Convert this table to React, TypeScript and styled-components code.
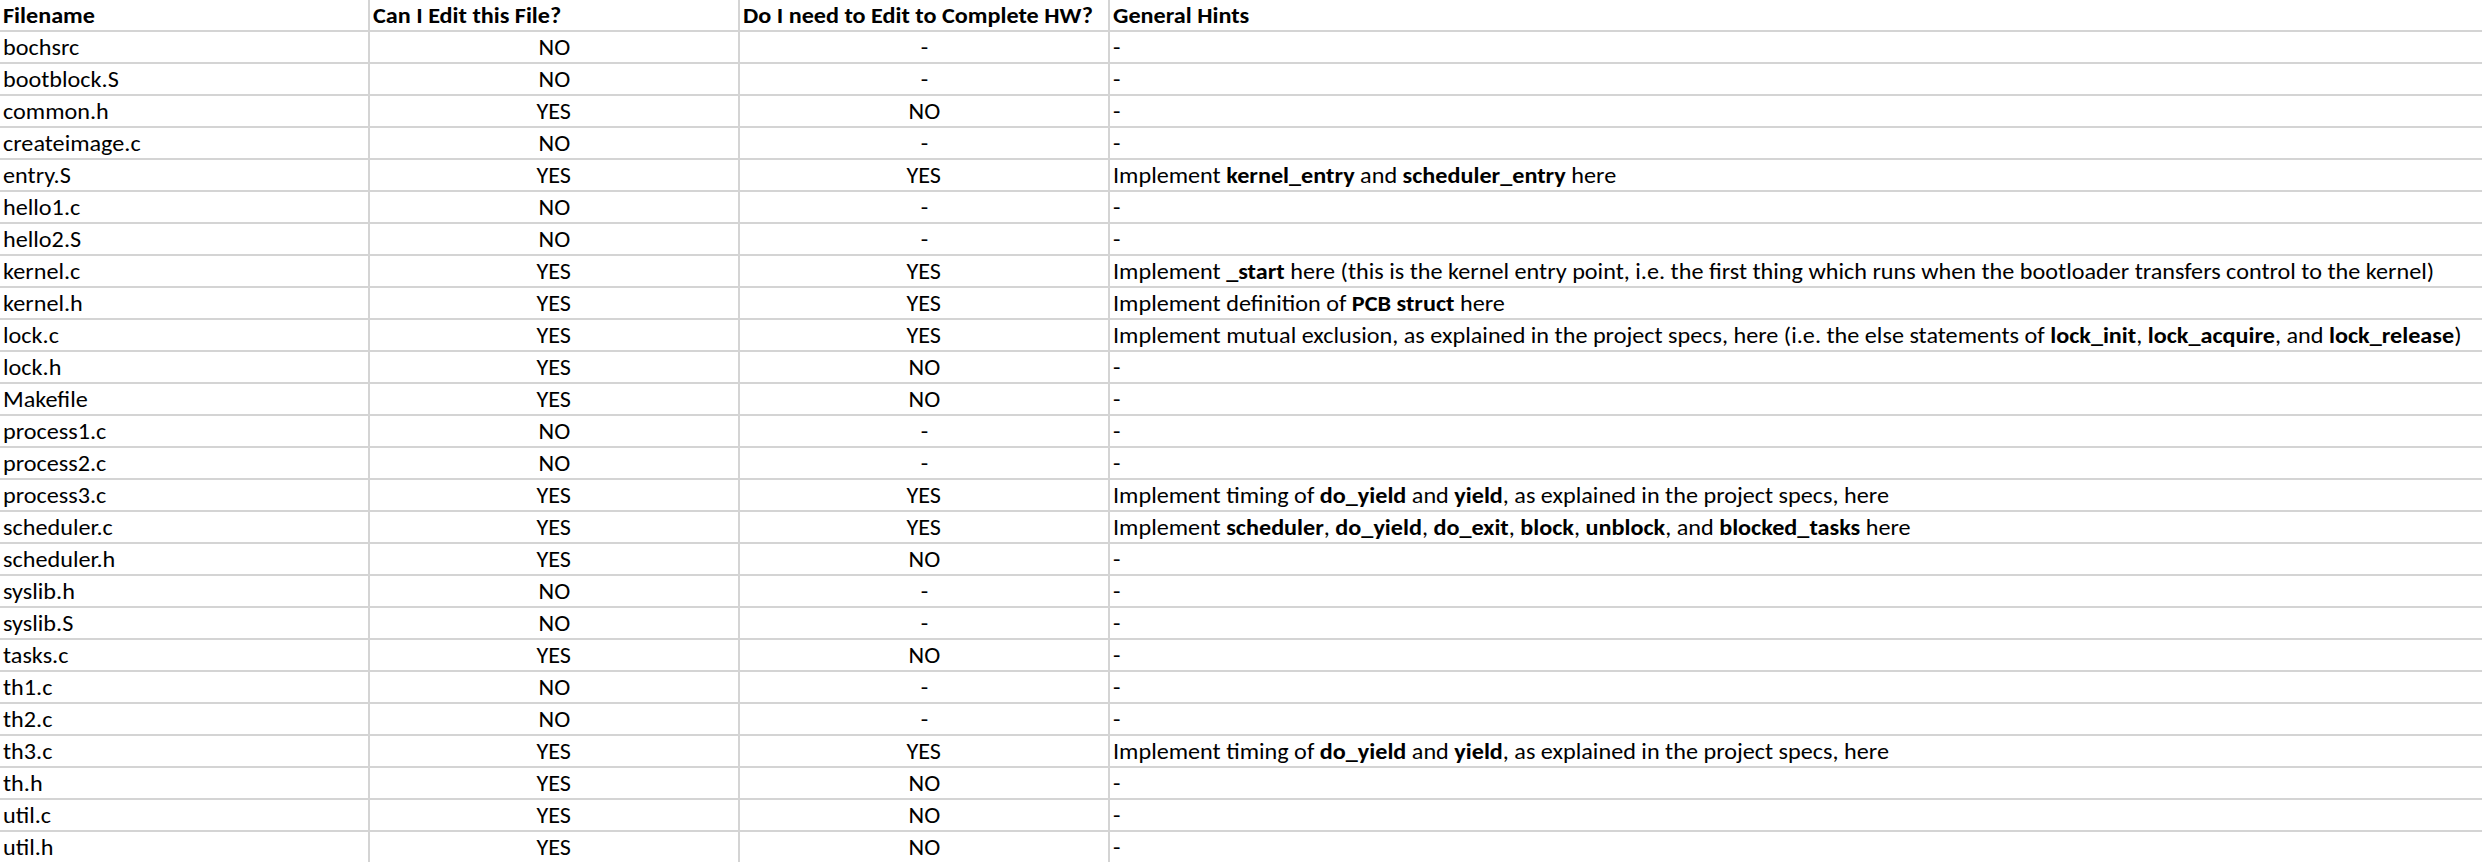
import React from "react";
import styled, { createGlobalStyle } from "styled-components";

const Global = createGlobalStyle`
  html, body { margin: 0; padding: 0; background: #ffffff; }
  body { font-family: Carlito, Lato, "Open Sans", sans-serif; color: #000; }
`;

const Sheet = styled.div`
  display: grid;
  grid-template-columns: 370px 370px 370px 1fr;
  width: 2482px;
  height: 862px;
  overflow: hidden;
  align-content: start;
`;

const Cell = styled.div<{ $align?: "left" | "center"; $last?: boolean; $head?: boolean }>`
  height: 30px;
  line-height: 31px;
  border-bottom: 2px solid #d4d4d4;
  border-right: ${(p) => (p.$last ? "none" : "2px solid #d4d4d4")};
  padding: 0 3px;
  font-size: 22px;
  font-weight: ${(p) => (p.$head ? 700 : 400)};
  text-align: ${(p) => p.$align ?? "left"};
  white-space: nowrap;
  overflow: visible;
`;

const Text = styled.span<{ $align?: "left" | "center" }>`
  display: inline-block;
  transform: scaleX(1.1);
  transform-origin: ${(p) => (p.$align === "center" ? "center" : "left")} center;
`;

const B = styled.b`
  font-weight: 700;
`;

type Row = [string, string, string, React.ReactNode];

const timing = (
  <>
    Implement timing of <B>do_yield</B> and <B>yield</B>, as explained in the project specs, here
  </>
);

const rows: Row[] = [
  ["bochsrc", "NO", "-", "-"],
  ["bootblock.S", "NO", "-", "-"],
  ["common.h", "YES", "NO", "-"],
  ["createimage.c", "NO", "-", "-"],
  [
    "entry.S",
    "YES",
    "YES",
    <>
      Implement <B>kernel_entry</B> and <B>scheduler_entry</B> here
    </>,
  ],
  ["hello1.c", "NO", "-", "-"],
  ["hello2.S", "NO", "-", "-"],
  [
    "kernel.c",
    "YES",
    "YES",
    <>
      Implement <B>_start</B> here (this is the kernel entry point, i.e. the first thing which runs when the
      bootloader transfers control to the kernel)
    </>,
  ],
  [
    "kernel.h",
    "YES",
    "YES",
    <>
      Implement definition of <B>PCB struct</B> here
    </>,
  ],
  [
    "lock.c",
    "YES",
    "YES",
    <>
      Implement mutual exclusion, as explained in the project specs, here (i.e. the else statements of{" "}
      <B>lock_init</B>, <B>lock_acquire</B>, and <B>lock_release</B>)
    </>,
  ],
  ["lock.h", "YES", "NO", "-"],
  ["Makefile", "YES", "NO", "-"],
  ["process1.c", "NO", "-", "-"],
  ["process2.c", "NO", "-", "-"],
  ["process3.c", "YES", "YES", timing],
  [
    "scheduler.c",
    "YES",
    "YES",
    <>
      Implement <B>scheduler</B>, <B>do_yield</B>, <B>do_exit</B>, <B>block</B>, <B>unblock</B>, and{" "}
      <B>blocked_tasks</B> here
    </>,
  ],
  ["scheduler.h", "YES", "NO", "-"],
  ["syslib.h", "NO", "-", "-"],
  ["syslib.S", "NO", "-", "-"],
  ["tasks.c", "YES", "NO", "-"],
  ["th1.c", "NO", "-", "-"],
  ["th2.c", "NO", "-", "-"],
  ["th3.c", "YES", "YES", timing],
  ["th.h", "YES", "NO", "-"],
  ["util.c", "YES", "NO", "-"],
  ["util.h", "YES", "NO", "-"],
];

export default function App() {
  return (
    <>
      <Global />
      <Sheet>
        <Cell $head>
          <Text>Filename</Text>
        </Cell>
        <Cell $head>
          <Text>Can I Edit this File?</Text>
        </Cell>
        <Cell $head>
          <Text>Do I need to Edit to Complete HW?</Text>
        </Cell>
        <Cell $head $last>
          <Text>General Hints</Text>
        </Cell>
        {rows.map(([name, canEdit, need, hint]) => (
          <React.Fragment key={name}>
            <Cell>
              <Text>{name}</Text>
            </Cell>
            <Cell $align="center">
              <Text $align="center">{canEdit}</Text>
            </Cell>
            <Cell $align="center">
              <Text $align="center">{need}</Text>
            </Cell>
            <Cell $last>
              <Text>{hint}</Text>
            </Cell>
          </React.Fragment>
        ))}
      </Sheet>
    </>
  );
}
